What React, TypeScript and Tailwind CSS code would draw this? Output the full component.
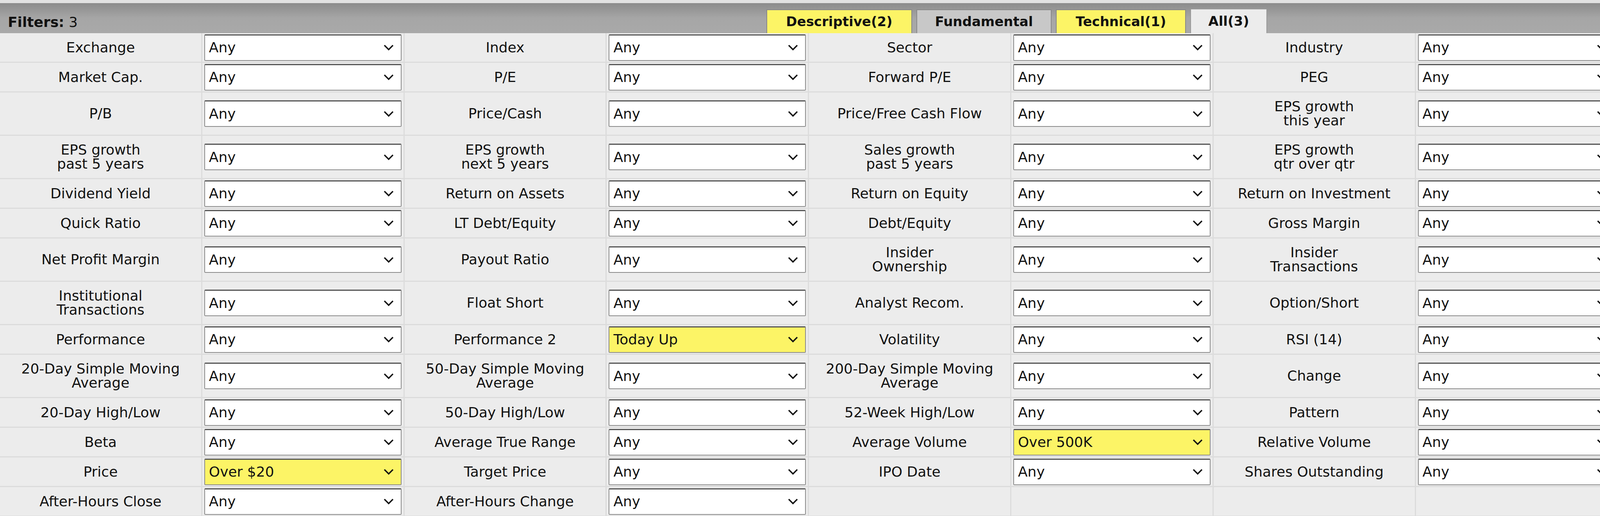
import React from "react";

type C = [string, string?, boolean?];
const rows: { h: number; cells: C[] }[] = [
  { h: 76, cells: [["Exchange"], ["Index"], ["Sector"], ["Industry"], ["Country"]] },
  { h: 76, cells: [["Market Cap."], ["P/E"], ["Forward P/E"], ["PEG"], ["P/S"]] },
  { h: 111, cells: [["P/B"], ["Price/Cash"], ["Price/Free Cash Flow"], ["EPS growth\nthis year"], ["EPS growth\nnext year"]] },
  { h: 111, cells: [["EPS growth\npast 5 years"], ["EPS growth\nnext 5 years"], ["Sales growth\npast 5 years"], ["EPS growth\nqtr over qtr"], ["Sales growth\nqtr over qtr"]] },
  { h: 76, cells: [["Dividend Yield"], ["Return on Assets"], ["Return on Equity"], ["Return on Investment"], ["Current Ratio"]] },
  { h: 76, cells: [["Quick Ratio"], ["LT Debt/Equity"], ["Debt/Equity"], ["Gross Margin"], ["Operating Margin"]] },
  { h: 111, cells: [["Net Profit Margin"], ["Payout Ratio"], ["Insider\nOwnership"], ["Insider\nTransactions"], ["Institutional\nOwnership"]] },
  { h: 111, cells: [["Institutional\nTransactions"], ["Float Short"], ["Analyst Recom."], ["Option/Short"], ["Earnings Date"]] },
  { h: 76, cells: [["Performance"], ["Performance 2", "Today Up", true], ["Volatility"], ["RSI (14)"], ["Gap"]] },
  { h: 111, cells: [["20-Day Simple Moving\nAverage"], ["50-Day Simple Moving\nAverage"], ["200-Day Simple Moving\nAverage"], ["Change"], ["Change from Open"]] },
  { h: 76, cells: [["20-Day High/Low"], ["50-Day High/Low"], ["52-Week High/Low"], ["Pattern"], ["Candlestick"]] },
  { h: 76, cells: [["Beta"], ["Average True Range"], ["Average Volume", "Over 500K", true], ["Relative Volume"], ["Current Volume"]] },
  { h: 76, cells: [["Price", "Over $20", true], ["Target Price"], ["IPO Date"], ["Shares Outstanding"], ["Float"]] },
];

function Sel({ v = "Any", y = false }: { v?: string; y?: boolean }) {
  return (
    <div
      className={`w-full h-[68px] flex items-center justify-between pl-[10px] pr-[18px] border-2 border-[#8a8a8a] border-t-[3px] border-t-[#555] rounded-[3px] ${y ? "bg-[#fcf466]" : "bg-white"}`}
    >
      <span>{v}</span>
      <svg width="26" height="16" viewBox="0 0 26 16">
        <path d="M2 2 L13 13 L24 2" fill="none" stroke="#111" strokeWidth="3.5" />
      </svg>
    </div>
  );
}

function Label({ t, h }: { t: string; h: number }) {
  const parts = t.split("\n");
  return (
    <div
      style={{ height: h }}
      className="min-w-0 bg-[#ececec] border-r-[3px] border-b-[3px] border-[#dcdcdc] flex items-center justify-center text-center leading-[36px] whitespace-nowrap"
    >
      <div>
        {parts.map((p, i) => (
          <div key={i}>{p}</div>
        ))}
      </div>
    </div>
  );
}

function SelCell({ children, h }: { children?: React.ReactNode; h: number }) {
  return (
    <div
      style={{ height: h }}
      className="min-w-0 bg-[#ececec] border-r-[3px] border-b-[3px] border-[#dcdcdc] flex items-center px-[5px]"
    >
      {children}
    </div>
  );
}

export default function App() {
  return (
    <div
      className="w-[5178px] h-[1322px] bg-[#ececec] text-[#111] text-[36px] overflow-hidden"
      style={{ fontFamily: '"DejaVu Sans", Verdana, sans-serif' }}
    >
      <div className="h-[8px] bg-[#e2e2e2]" />
      <div className="h-[77px] bg-gradient-to-b from-[#8c8c8c] via-[#a6a6a6] to-[#a9a9a9] relative flex items-end">
        <div className="absolute left-[20px] top-[22px] text-[36px]">
          <b>Filters:</b> 3
        </div>
        <div className="ml-[1962px] flex gap-[11px] items-end text-[34px] font-bold">
          <div className="w-[373px] h-[61px] bg-[#fcf466] border-2 border-[#888] border-b-0 flex items-center justify-center">Descriptive(2)</div>
          <div className="w-[346px] h-[61px] bg-[#c8c8c8] border-2 border-[#888] border-b-0 flex items-center justify-center">Fundamental</div>
          <div className="w-[333px] h-[61px] bg-[#fcf466] border-2 border-[#888] border-b-0 flex items-center justify-center">Technical(1)</div>
          <div className="w-[197px] h-[63px] bg-[#ececec] border-2 border-[#999] border-b-0 flex items-center justify-center">All(3)</div>
        </div>
      </div>
      <div className="grid grid-cols-[repeat(10,517.8px)]">
        {rows.map((r, ri) =>
          r.cells.map((c, ci) => (
            <React.Fragment key={ri + "-" + ci}>
              <Label t={c[0]} h={r.h} />
              <SelCell h={r.h}>
                <Sel v={c[1]} y={c[2]} />
              </SelCell>
            </React.Fragment>
          ))
        )}
        <Label t="After-Hours Close" h={76} />
        <SelCell h={76}><Sel /></SelCell>
        <Label t="After-Hours Change" h={76} />
        <SelCell h={76}><Sel /></SelCell>
        <SelCell h={76} />
        <SelCell h={76} />
        <SelCell h={76} />
        <SelCell h={76} />
        <SelCell h={76} />
        <div className="bg-[#ececec] border-b-[3px] border-[#dcdcdc] flex items-center justify-center h-[76px]">
          <button className="w-[240px] h-[64px] bg-[#efefef] border-2 border-[#767676] rounded-[4px] text-[36px]">Reset (3)</button>
        </div>
      </div>
    </div>
  );
}
